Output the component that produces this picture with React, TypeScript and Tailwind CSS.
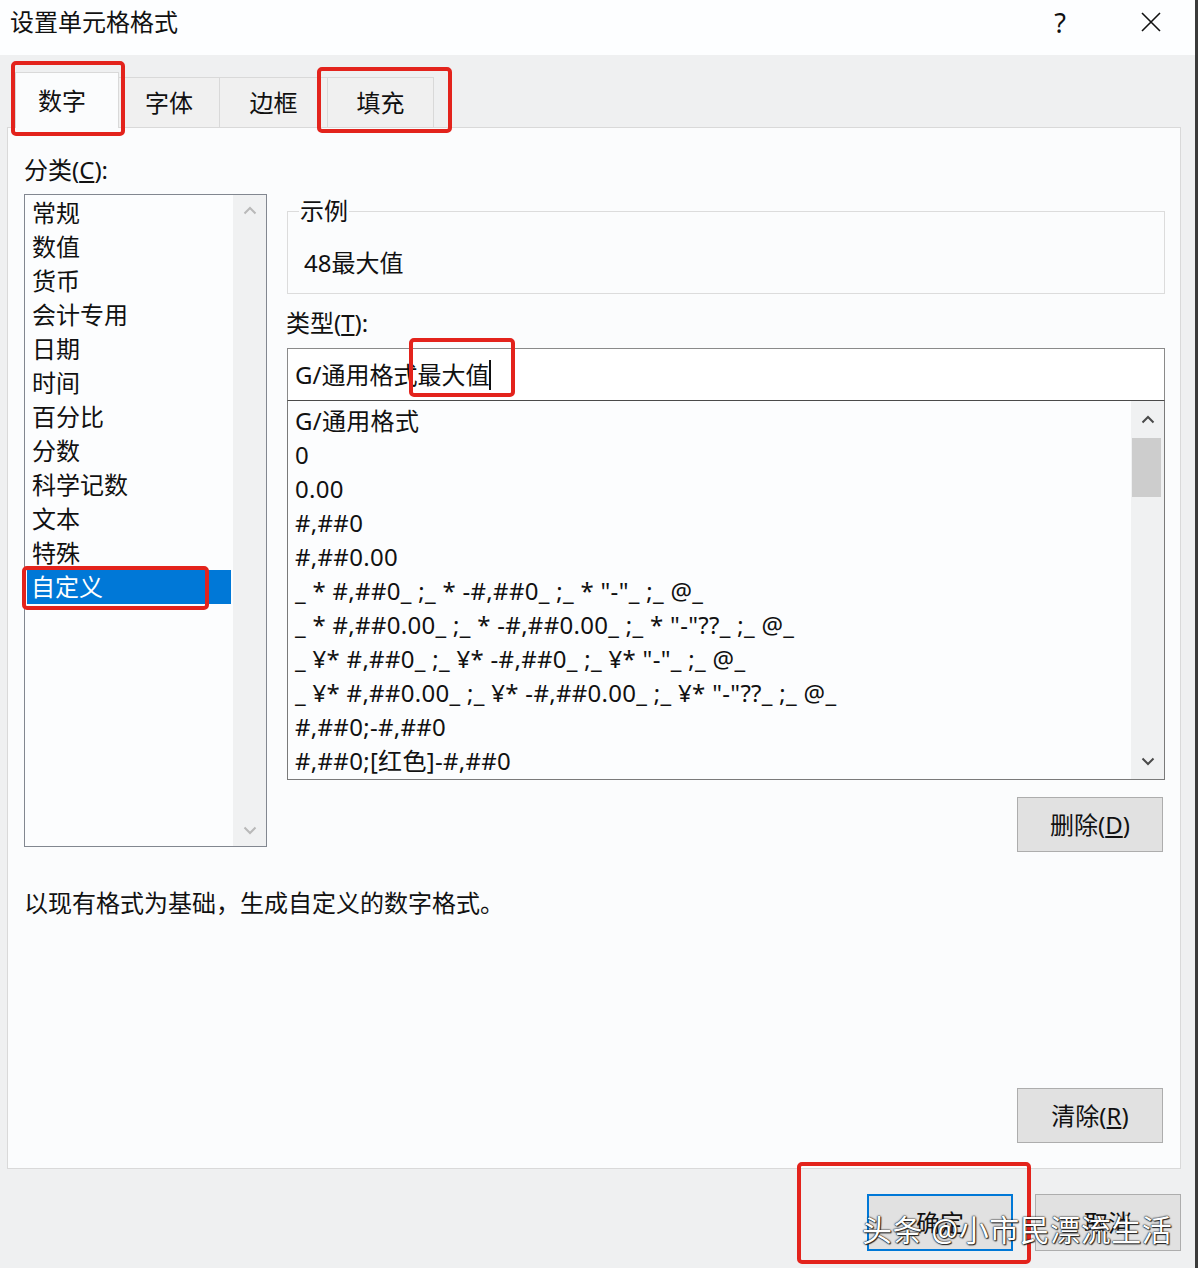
import React from 'react';

const categories = ['常规', '数值', '货币', '会计专用', '日期', '时间', '百分比', '分数', '科学记数', '文本', '特殊', '自定义'];

const formats = [
  'G/通用格式',
  '0',
  '0.00',
  '#,##0',
  '#,##0.00',
  '_ * #,##0_ ;_ * -#,##0_ ;_ * "-"_ ;_ @_',
  '_ * #,##0.00_ ;_ * -#,##0.00_ ;_ * "-"??_ ;_ @_',
  '_ ¥* #,##0_ ;_ ¥* -#,##0_ ;_ ¥* "-"_ ;_ @_',
  '_ ¥* #,##0.00_ ;_ ¥* -#,##0.00_ ;_ ¥* "-"??_ ;_ @_',
  '#,##0;-#,##0',
  '#,##0;[红色]-#,##0',
];

function Chevron({ dir, className }: { dir: 'up' | 'down'; className?: string }) {
  return (
    <svg width="14" height="9" viewBox="0 0 14 9" className={className}>
      <path
        d={dir === 'up' ? 'M1.5 7.5 7 2l5.5 5.5' : 'M1.5 1.5 7 7l5.5-5.5'}
        fill="none"
        stroke="currentColor"
        strokeWidth="2"
      />
    </svg>
  );
}

// label with underlined access key, e.g. 分类(C):
function Label({ text, hotkey, tail = '' }: { text: string; hotkey: string; tail?: string }) {
  return (
    <span>
      {text}(<span className="underline underline-offset-2">{hotkey}</span>){tail}
    </span>
  );
}

function Tab({ label, active, width }: { label: string; active?: boolean; width: string }) {
  if (active) {
    return (
      <div className={`${width} h-[56px] -mb-px relative z-10 bg-[#fbfcfd] border border-b-0 border-[#d9d9d9] flex items-center justify-center pr-[10px]`}>
        {label}
      </div>
    );
  }
  return (
    <div className={`${width} h-[50px] bg-[#f0f0f0] border border-b-0 border-l-0 border-[#d9d9d9] flex items-center justify-center`}>
      {label}
    </div>
  );
}

function Button({ children, primary }: { children: React.ReactNode; primary?: boolean }) {
  return (
    <div
      className={
        primary
          ? 'w-[146px] h-[57px] bg-[#e1e1e1] border-2 border-[#0078d7] flex items-center justify-center'
          : 'w-[146px] h-[57px] bg-[#e1e1e1] border border-[#adadad] flex items-center justify-center'
      }
    >
      {children}
    </div>
  );
}

export default function App() {
  return (
    <div className="w-[1198px] h-[1268px] bg-[#eff0f1] border-r-[3px] border-[#3b3b3b] relative overflow-hidden flex flex-col text-[24px] text-[#111] font-['Noto_Sans','Noto_Sans_CJK_SC',sans-serif]">
      {/* title bar */}
      <div className="h-[55px] shrink-0 bg-[#fdfeff] flex items-center pl-[10px] pb-[11px]">
        <span className="leading-none">设置单元格格式</span>
        <span className="ml-auto w-[16px] text-center text-[27px] leading-none">?</span>
        <svg width="20" height="20" viewBox="0 0 20 20" className="ml-[73px] mr-[34px]">
          <path d="M1 1l18 18M19 1 1 19" stroke="#111" strokeWidth="1.6" fill="none" />
        </svg>
      </div>

      {/* tabs */}
      <div className="h-[72px] shrink-0 flex items-end pl-[15px]">
        <Tab label="数字" active width="w-[104px]" />
        <Tab label="字体" width="w-[101px]" />
        <Tab label="边框" width="w-[108px]" />
        <Tab label="填充" width="w-[106px]" />
      </div>

      {/* panel */}
      <div className="ml-[7px] w-[1174px] h-[1042px] shrink-0 bg-[#fbfcfd] border border-[#d9d9d9] flex flex-col">
        <div className="h-[724px] flex">
          {/* category */}
          <div className="ml-[16px] w-[243px] flex flex-col">
            <div className="mt-[25px] leading-[34px]">
              <Label text="分类" hotkey="C" tail=":" />
            </div>
            <div className="mt-[7px] h-[653px] border border-[#828790] bg-[#fcfdfe] flex">
              <ul className="flex-1 pt-[1px] px-[2px]">
                {categories.map(c => (
                  <li
                    key={c}
                    className={
                      c === '自定义'
                        ? 'h-[34px] leading-[34px] pl-[4px] bg-[#0078d7] text-white'
                        : 'h-[34px] leading-[34px] pl-[5px]'
                    }
                  >
                    {c}
                  </li>
                ))}
              </ul>
              <div className="w-[33px] bg-[#f0f1f2] flex flex-col items-center justify-between py-[11px] text-[#b9b9b9]">
                <Chevron dir="up" />
                <Chevron dir="down" />
              </div>
            </div>
          </div>

          {/* right column */}
          <div className="ml-[20px] w-[878px] flex flex-col">
            <fieldset className="mt-[71px] h-[95px] border border-[#dcdcdc] pl-[11px]">
              <legend className="leading-[24px] px-[1px]">示例</legend>
              <div className="mt-[23px] ml-[5px] leading-[34px]">48最大值</div>
            </fieldset>

            <div className="mt-[12px] leading-[34px] -ml-[1px]">
              <Label text="类型" hotkey="T" tail=":" />
            </div>

            <div className="mt-[8px] h-[52px] border border-b-0 border-[#8a8a8a] bg-white flex items-center pl-[7px]">
              <span className="leading-none">G/通用格式最大值</span>
              <span className="w-[2px] h-[30px] bg-[#111]" />
            </div>

            <div className="h-[380px] border border-[#7a7a7a] border-t-[#4a4a4a] bg-[#fcfdfe] flex">
              <ul className="flex-1 pt-[3px] pl-[7px] whitespace-pre tracking-[0.3px]">
                {formats.map(f => (
                  <li key={f} className="h-[34px] leading-[34px]">
                    {f}
                  </li>
                ))}
              </ul>
              <div className="w-[33px] bg-[#f0f1f2] flex flex-col text-[#4a4a4a]">
                <div className="h-[37px] flex items-center justify-center">
                  <Chevron dir="up" />
                </div>
                <div className="h-[59px] mx-[1px] mr-[3px] bg-[#cdcdcd]" />
                <div className="flex-1" />
                <div className="h-[36px] flex items-center justify-center">
                  <Chevron dir="down" />
                </div>
              </div>
            </div>

            <div className="mt-[17px] self-end mr-[2px] w-[146px] h-[55px] bg-[#e1e1e1] border border-[#adadad] flex items-center justify-center">
              <Label text="删除" hotkey="D" />
            </div>
          </div>
        </div>

        <div className="mt-[34px] ml-[16px] leading-[34px]">以现有格式为基础，生成自定义的数字格式。</div>

        <div className="flex-1" />

        <div className="self-end mr-[17px] mb-[25px] w-[146px] h-[55px] bg-[#e1e1e1] border border-[#adadad] flex items-center justify-center">
          <Label text="清除" hotkey="R" />
        </div>
      </div>

      {/* footer */}
      <div className="flex-1 flex justify-end items-start pt-[25px] pr-[14px] gap-[22px]">
        <Button primary>确定</Button>
        <Button>取消</Button>
      </div>

      {/* red annotation boxes */}
      <div className="absolute left-[11px] top-[61px] w-[114px] h-[75px] border-[4px] border-[#e3231c] rounded-[5px] z-20" />
      <div className="absolute left-[317px] top-[67px] w-[135px] h-[66px] border-[4px] border-[#e3231c] rounded-[5px] z-20" />
      <div className="absolute left-[409px] top-[338px] w-[106px] h-[59px] border-[4px] border-[#e3231c] rounded-[5px] z-20" />
      <div className="absolute left-[22px] top-[566px] w-[187px] h-[44px] border-[4px] border-[#e3231c] rounded-[5px] z-20" />
      <div className="absolute left-[797px] top-[1162px] w-[234px] h-[102px] border-[4px] border-[#e3231c] rounded-[5px] z-20" />

      {/* watermark */}
      <div className="absolute left-[862px] top-[1210px] z-30 text-[30px] leading-[40px] tracking-[0.5px] text-white whitespace-nowrap [text-shadow:0_0_2px_#000,0_0_1px_#000,1px_1px_1px_#333]">
        头条 @小市民漂流生活
      </div>
    </div>
  );
}
